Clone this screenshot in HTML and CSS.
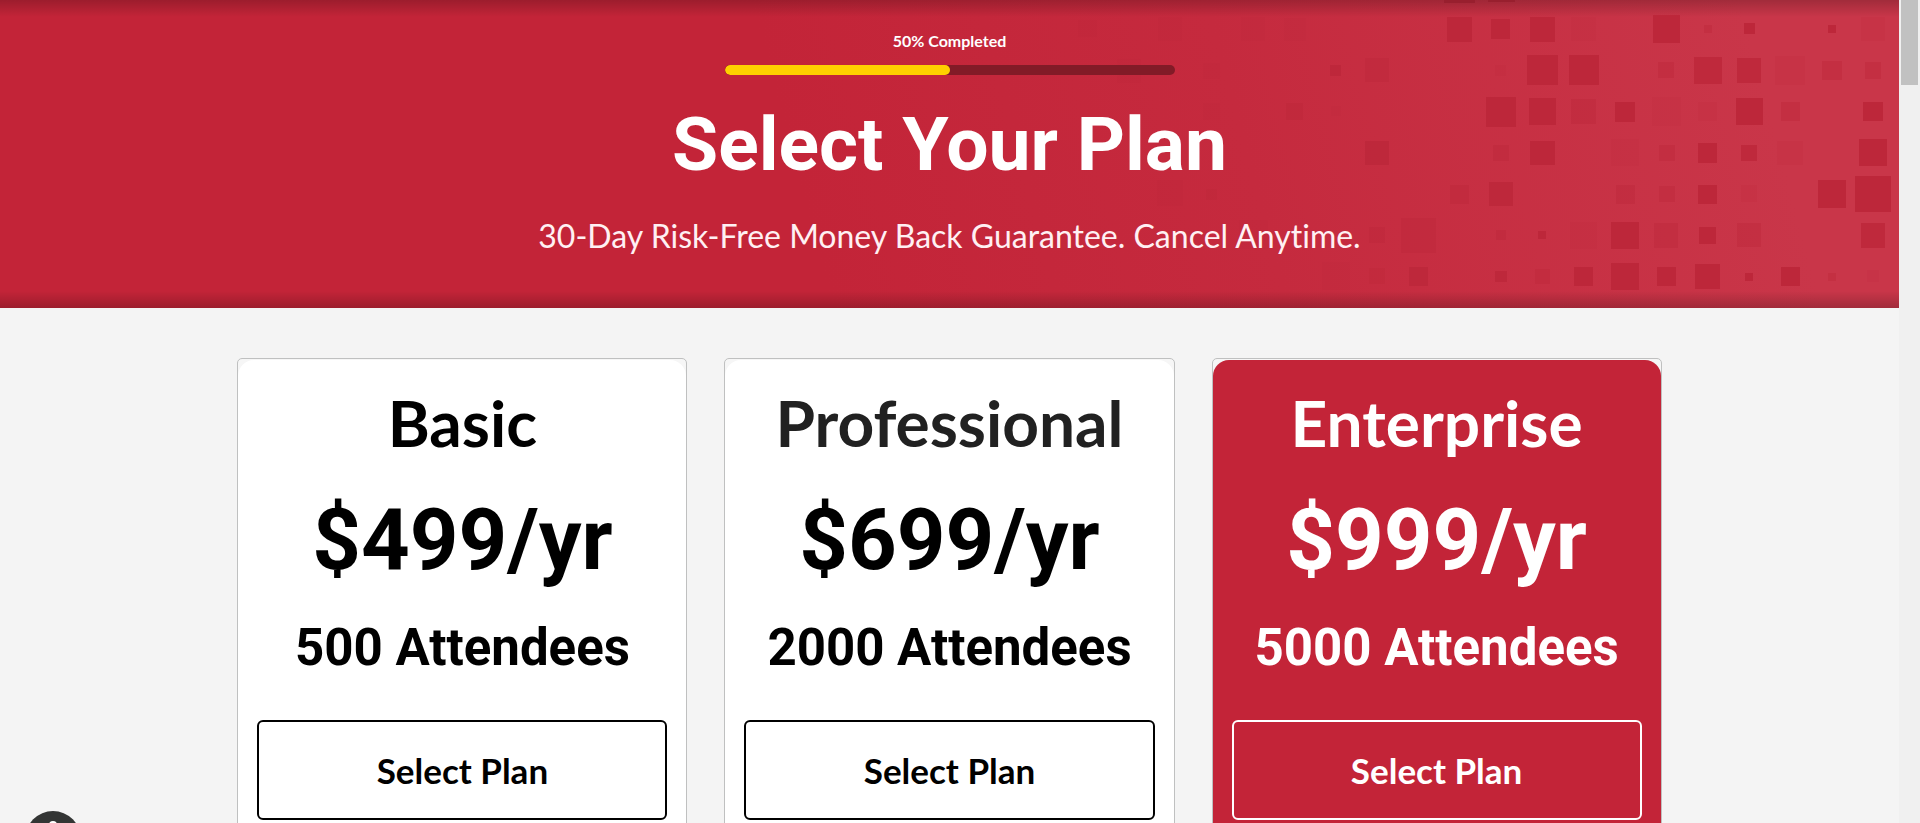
FILE: index.html
```html
<!DOCTYPE html>
<html lang="en">
<head>
<meta charset="utf-8">
<title>Select Your Plan</title>
<link rel="stylesheet" href="styles.css">
</head>
<body>
<div class="page">
  <header class="hero">
    <svg class="hero-pattern" viewBox="899 0 1000 308" aria-hidden="true">
      <g class="hero-pattern-edge">
        <rect x="1444" y="0" width="31" height="3"/><rect x="1488" y="0" width="27" height="2"/>
      </g>
      <g>
        <rect x="1447" y="17" width="25" height="25"/><rect x="1491" y="19" width="19" height="20"/><rect x="1530" y="17" width="25" height="25"/><rect x="1653" y="15" width="27" height="28"/><rect x="1744" y="23" width="11" height="11"/><rect x="1828" y="25" width="8" height="8"/>
        <rect x="1527" y="55" width="31" height="30"/><rect x="1569" y="55" width="30" height="30"/>
        <rect x="1486" y="97" width="30" height="30"/><rect x="1529" y="98" width="27" height="27"/><rect x="1615" y="102" width="20" height="20"/><rect x="1736" y="98" width="27" height="27"/><rect x="1863" y="102" width="20" height="19"/>
        <rect x="1530" y="141" width="25" height="24"/><rect x="1698" y="143" width="19" height="20"/><rect x="1859" y="139" width="28" height="27"/>
        <rect x="1698" y="185" width="19" height="19"/><rect x="1818" y="180" width="28" height="28"/><rect x="1855" y="176" width="36" height="36"/>
        <rect x="1611" y="222" width="28" height="27"/><rect x="1699" y="227" width="17" height="17"/><rect x="1538" y="231" width="8" height="8"/>
        <rect x="1574" y="267" width="19" height="19"/><rect x="1611" y="263" width="28" height="27"/><rect x="1657" y="267" width="19" height="19"/><rect x="1695" y="264" width="25" height="25"/><rect x="1745" y="273" width="8" height="8"/><rect x="1781" y="267" width="19" height="19"/>
      </g>
      <g opacity=".8">
        <rect x="1330" y="65" width="11" height="11"/><rect x="1694" y="57" width="28" height="27"/><rect x="1737" y="58" width="24" height="25"/>
        <rect x="1365" y="141" width="24" height="24"/><rect x="1741" y="145" width="16" height="16"/>
        <rect x="1489" y="182" width="24" height="24"/><rect x="1861" y="223" width="24" height="25"/>
        <rect x="1409" y="267" width="19" height="19"/><rect x="1495" y="271" width="12" height="11"/>
      </g>
      <g opacity=".4">
        <rect x="1365" y="58" width="24" height="24"/><rect x="1658" y="62" width="16" height="16"/><rect x="1822" y="61" width="20" height="19"/><rect x="1865" y="62" width="16" height="17"/><rect x="1704" y="25" width="8" height="8"/>
        <rect x="1286" y="103" width="17" height="17"/><rect x="1571" y="99" width="25" height="25"/><rect x="1781" y="102" width="19" height="19"/>
        <rect x="1493" y="145" width="16" height="16"/><rect x="1659" y="145" width="16" height="16"/>
        <rect x="1206" y="189" width="11" height="11"/><rect x="1450" y="185" width="19" height="19"/><rect x="1616" y="185" width="19" height="19"/><rect x="1659" y="186" width="16" height="16"/>
        <rect x="1369" y="227" width="16" height="16"/><rect x="1401" y="218" width="35" height="35"/><rect x="1496" y="230" width="10" height="10"/><rect x="1654" y="223" width="24" height="25"/><rect x="1737" y="223" width="24" height="24"/>
        <rect x="1369" y="268" width="16" height="16"/><rect x="1535" y="269" width="15" height="15"/><rect x="1828" y="273" width="8" height="8"/>
      </g>
      <g opacity=".15">
        <rect x="1078" y="20" width="19" height="17"/><rect x="1158" y="17" width="24" height="24"/><rect x="1241" y="17" width="24" height="24"/><rect x="1284" y="18" width="22" height="23"/><rect x="1571" y="17" width="25" height="24"/><rect x="1861" y="17" width="24" height="24"/>
        <rect x="1117" y="59" width="24" height="24"/><rect x="1203" y="63" width="17" height="16"/><rect x="1495" y="65" width="11" height="11"/><rect x="1775" y="56" width="30" height="29"/>
        <rect x="1203" y="103" width="17" height="17"/><rect x="1331" y="106" width="10" height="10"/><rect x="1652" y="97" width="29" height="29"/><rect x="1698" y="102" width="19" height="19"/>
        <rect x="1611" y="139" width="28" height="27"/><rect x="1777" y="141" width="26" height="24"/>
        <rect x="1157" y="180" width="26" height="26"/><rect x="1741" y="185" width="16" height="17"/>
        <rect x="1239" y="220" width="29" height="29"/><rect x="1570" y="222" width="27" height="27"/><rect x="1322" y="262" width="28" height="28"/><rect x="1867" y="270" width="12" height="12"/>
      </g>
    </svg>
    <div class="hero-content">
      <label class="progress-label" for="signup-progress">50% Completed</label>
      <progress class="progress" id="signup-progress" value="50" max="100"></progress>
      <h1 class="hero-title">Select Your Plan</h1>
      <p class="hero-subtitle">30-Day Risk-Free Money Back Guarantee. Cancel Anytime.</p>
    </div>
  </header>
  <main class="plans">
    <article class="plan">
      <div class="plan-body">
        <h2 class="plan-name">Basic</h2>
        <p class="plan-price">$499/yr</p>
        <p class="plan-size">500 Attendees</p>
        <button class="plan-button" type="button">Select Plan</button>
      </div>
    </article>
    <article class="plan">
      <div class="plan-body">
        <h2 class="plan-name plan-name-soft">Professional</h2>
        <p class="plan-price">$699/yr</p>
        <p class="plan-size">2000 Attendees</p>
        <button class="plan-button" type="button">Select Plan</button>
      </div>
    </article>
    <article class="plan">
      <div class="plan-body plan-body-featured">
        <h2 class="plan-name">Enterprise</h2>
        <p class="plan-price">$999/yr</p>
        <p class="plan-size">5000 Attendees</p>
        <button class="plan-button" type="button">Select Plan</button>
      </div>
    </article>
  </main>
</div>
<div class="scrollbar" aria-hidden="true"><div class="scrollbar-thumb"></div></div>
<button class="accessibility" type="button" aria-label="Accessibility options">
  <svg viewBox="0 0 56 56" width="56" height="56" aria-hidden="true">
    <circle cx="28" cy="14" r="4"/>
    <path d="M14 20l10 3v8l-5 14 4 1 5-13 5 13 4-1-5-14v-8l10-3-1-3-13 3-13-3z"/>
  </svg>
</button>
</body>
</html>
```
FILE: styles.css
```css
* {
  box-sizing: border-box;
}

body {
  margin: 0;
  height: 100vh;
  display: flex;
  overflow: hidden;
  background: #f4f4f4;
  color: #000;
  font-family: Lato, "Liberation Sans", sans-serif;
  font-variant-ligatures: none;
}

h1, h2, p {
  margin: 0;
}

.page {
  flex: 1;
  min-width: 0;
  overflow: hidden;
}

.hero {
  position: relative;
  overflow: hidden;
  background:
    linear-gradient(rgba(0, 0, 0, 0.2), rgba(0, 0, 0, 0.14) 5px, transparent 17px),
    linear-gradient(0deg, rgba(0, 0, 0, 0.2), transparent 17px),
    linear-gradient(75deg, #c32438 42%, #c52a3e 65%, #c93649 92%);
  color: #fff;
  text-align: center;
}

.hero-pattern {
  position: absolute;
  top: 0;
  right: 0;
  height: 100%;
  fill: #bd273a;
}

.hero-pattern-edge {
  fill: #981f2e;
}

.hero-content {
  position: relative;
  display: flex;
  flex-direction: column;
  align-items: center;
  padding: 31px 20px 52px;
}

.progress-label {
  font-size: 16px;
  font-weight: 700;
  line-height: 20px;
}

.progress {
  appearance: none;
  display: block;
  width: 450px;
  max-width: 100%;
  height: 10px;
  margin-top: 14px;
  border: 0;
  border-radius: 5px;
  overflow: hidden;
  background: #821b27;
}

.progress::-webkit-progress-bar {
  background: #821b27;
}

.progress::-webkit-progress-value {
  border-radius: 5px;
  background: #ffd000;
}

.hero-title {
  margin-top: 24px;
  font-family: Roboto, "Liberation Sans", sans-serif;
  font-size: 75px;
  font-weight: 700;
  line-height: 90px;
}

.hero-subtitle {
  margin-top: 27px;
  color: #fff0f3;
  font-size: 32px;
  line-height: 40px;
}

.plans {
  display: grid;
  grid-template-columns: repeat(3, 1fr);
  gap: 37px;
  width: 75%;
  margin: 50px auto 0;
}

.plan {
  padding-top: 1px;
  border: 1px solid #bfc0c0;
  border-radius: 5px;
  background: #f6f6f6;
}

.plan-body {
  display: flex;
  flex-direction: column;
  padding: 25px 19px 40px;
  border-radius: 16px 16px 0 0;
  background: #fff;
  text-align: center;
}

.plan-body-featured {
  background: #c32438;
  color: #fff;
}

.plan-name {
  font-size: 64px;
  font-weight: 700;
  line-height: 76px;
}

.plan-name-soft {
  color: #212121;
}

.plan-price {
  margin-top: 29px;
  font-family: Roboto, "Liberation Sans", sans-serif;
  font-size: 85px;
  font-weight: 700;
  line-height: 100px;
}

.plan-size {
  margin-top: 28px;
  font-family: Roboto, "Liberation Sans", sans-serif;
  font-size: 51px;
  font-weight: 700;
  line-height: 60px;
}

.plan-button {
  height: 100px;
  margin-top: 42px;
  border: 2px solid currentColor;
  border-radius: 6px;
  background: transparent;
  color: inherit;
  font-family: inherit;
  font-size: 35px;
  font-weight: 700;
  cursor: pointer;
}

.scrollbar {
  flex: none;
  width: 21px;
  padding: 0 2px;
  background: #f0f0f0;
}

.scrollbar-thumb {
  height: 85px;
  background: #c1c1c1;
}

.accessibility {
  position: fixed;
  left: 25px;
  bottom: -44px;
  width: 56px;
  height: 56px;
  padding: 0;
  border: 0;
  border-radius: 50%;
  background: #333534;
  fill: #fff;
}

.accessibility svg {
  display: block;
}
```
